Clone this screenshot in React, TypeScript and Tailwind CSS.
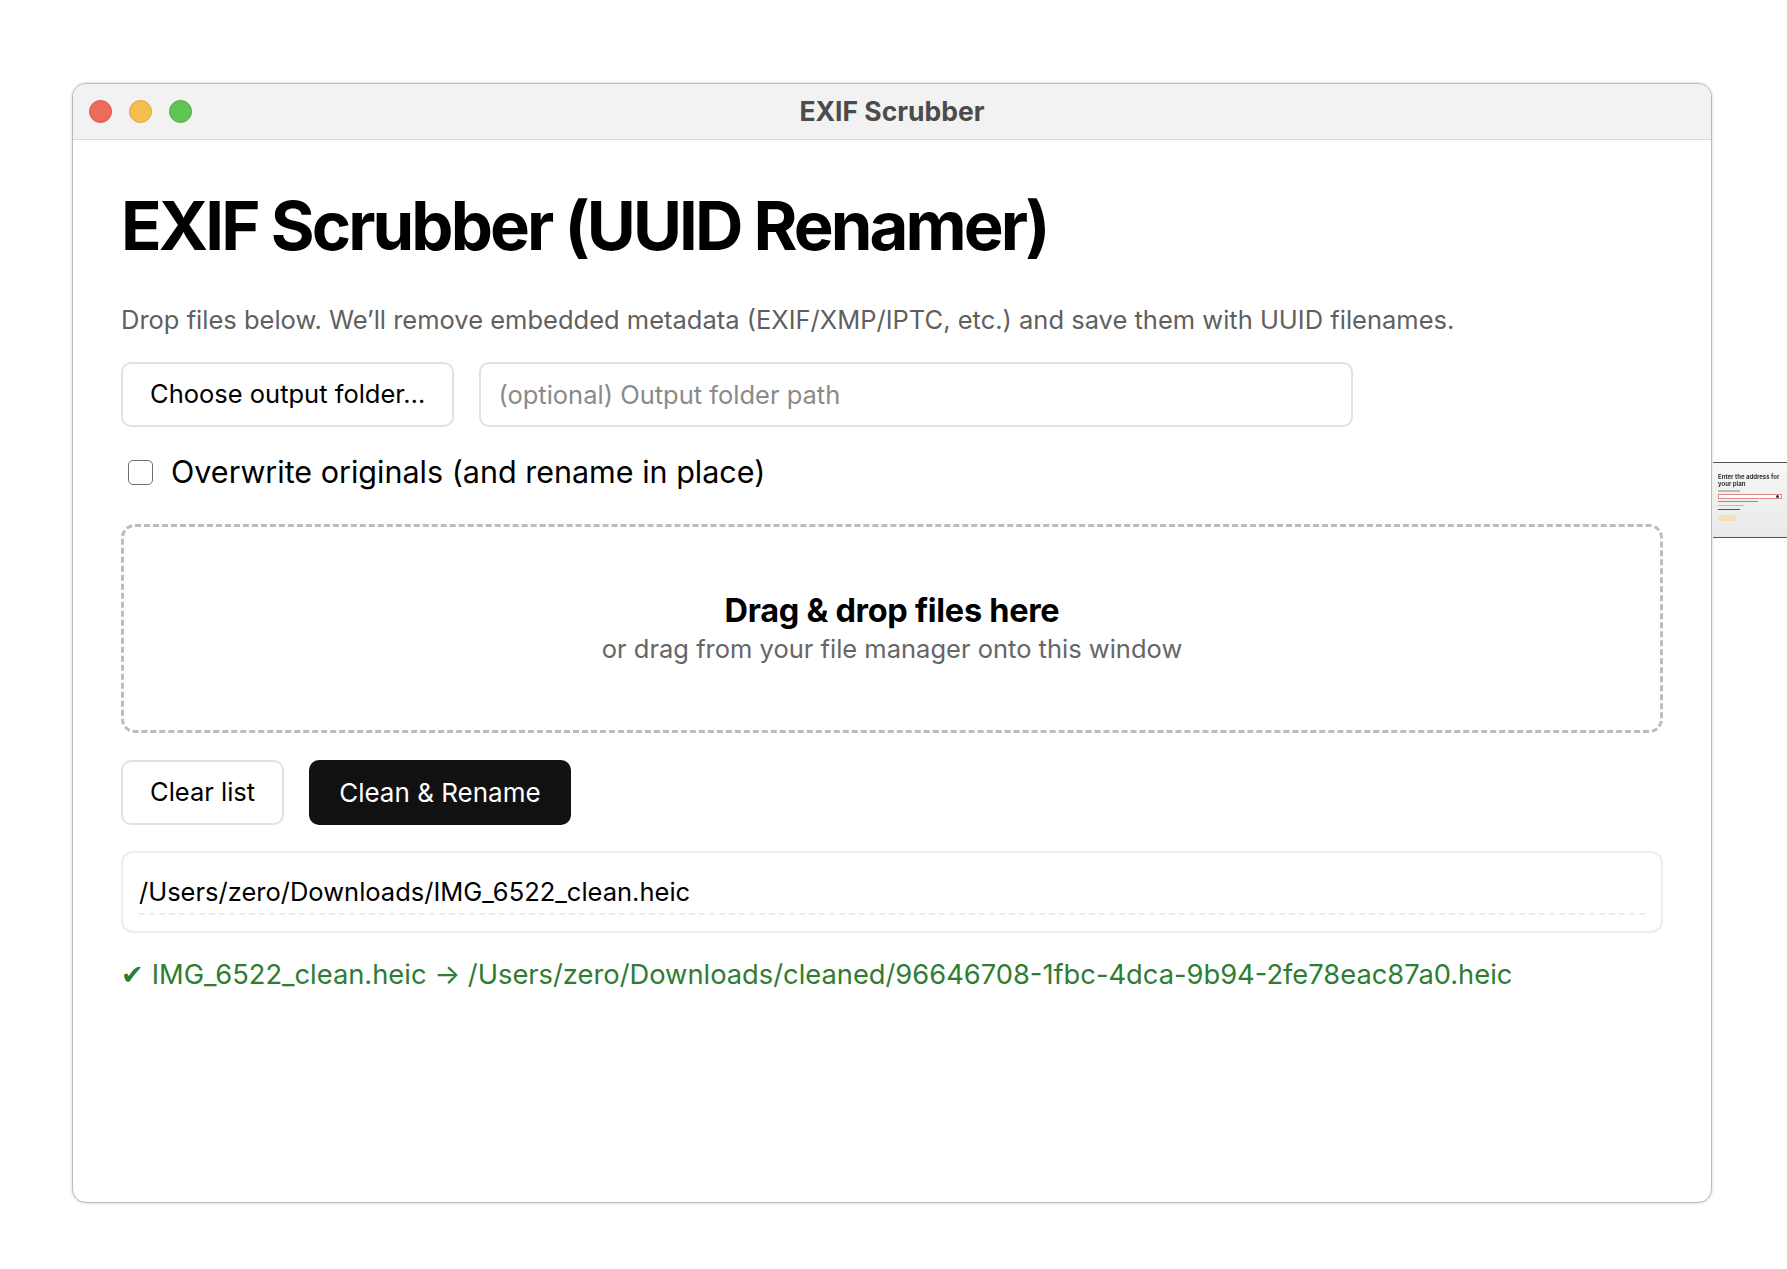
import React from 'react';

function TrafficLights() {
  return (
    <div className="flex items-center gap-[17px]">
      <span className="block w-[23px] h-[23px] rounded-full bg-[#ee6a5f] border border-[#d8564b]" />
      <span className="block w-[23px] h-[23px] rounded-full bg-[#f5bf4f] border border-[#dea63a]" />
      <span className="block w-[23px] h-[23px] rounded-full bg-[#61c454] border border-[#4fab43]" />
    </div>
  );
}

function PeekThumbnail() {
  // a sliver of another window peeking out past the right edge
  return (
    <div className="absolute left-[1713px] top-[462px] w-[74px] h-[76px] border-t border-b border-[#555] bg-gradient-to-b from-[#f7f7f7] to-[#e9e9e9] blur-[0.6px] px-[5px] pt-[10px]">
      <div className="text-[6px] leading-[7px] font-bold text-[#333]">Enter the address for your plan</div>
      <div className="mt-[3px] h-[2px] w-[22px] bg-[#bbb]" />
      <div className="mt-[2px] h-[5px] w-full border border-[#e08a8a] bg-white flex justify-end items-center pr-[2px]">
        <span className="block w-[3px] h-[3px] rounded-full bg-[#333]" />
      </div>
      <div className="mt-[2px] h-[1px] w-[40px] bg-[#e07070]" />
      <div className="mt-[3px] h-[1px] w-[26px] bg-[#bbb]" />
      <div className="mt-[3px] h-[1px] w-[22px] bg-[#555]" />
      <div className="mt-[5px] h-[6px] w-[18px] rounded-full bg-[#f1e2b6]" />
    </div>
  );
}

export default function App() {
  return (
    <div className="relative w-[1787px] h-[1269px] bg-white overflow-hidden font-[Inter,sans-serif] pt-[83px] pl-[72px]">
      <div className="w-[1640px] h-[1120px] rounded-[14px] border border-[#b9b9b9] shadow-[0_0_3px_rgba(0,0,0,0.2)] overflow-hidden bg-white flex flex-col">
        {/* Title bar */}
        <div className="relative h-[56px] shrink-0 bg-[#f1f2f1] border-b border-[#d9d9d9] flex items-center pl-[16px]">
          <TrafficLights />
          <div className="absolute inset-0 flex items-center justify-center pointer-events-none">
            <span className="text-[26.5px] font-bold text-[#4b4b4b]">EXIF Scrubber</span>
          </div>
        </div>

        {/* Content */}
        <div className="px-[48px] pt-[52px] flex flex-col">
          <h1 className="text-[67px] leading-[67px] font-bold text-black tracking-[-2.9px]">
            EXIF Scrubber (UUID Renamer)
          </h1>

          <p className="mt-[45px] text-[25.5px] leading-[32px] text-[#5f5f5f]">
            Drop files below. We’ll remove embedded metadata (EXIF/XMP/IPTC, etc.) and save them with UUID filenames.
          </p>

          <div className="mt-[26px] flex gap-[25px]">
            <button className="h-[65px] px-[27px] rounded-[10px] border-2 border-[#e2e2e2] bg-white text-[25.5px] text-black">
              Choose output folder…
            </button>
            <input
              className="h-[65px] w-[874px] px-[17px] rounded-[10px] border-2 border-[#e2e2e2] text-[25.5px] text-black placeholder:text-[#8a8a8a] outline-none"
              placeholder="(optional) Output folder path"
            />
          </div>

          <label className="mt-[29px] h-[32px] flex items-center gap-[18px] pl-[7px]">
            <span className="block w-[25px] h-[25px] rounded-[5px] border-[1.5px] border-[#707070] bg-white" />
            <span className="text-[30.5px] leading-[32px] text-black">Overwrite originals (and rename in place)</span>
          </label>

          <div className="mt-[36px] h-[209px] rounded-[14px] border-[3px] border-dashed border-[#bdbdbd] flex flex-col items-center justify-center">
            <div className="text-[32.5px] leading-[38px] font-bold text-black tracking-[-0.3px]">Drag &amp; drop files here</div>
            <div className="mt-[3px] text-[25.5px] leading-[32px] text-[#666]">or drag from your file manager onto this window</div>
          </div>

          <div className="mt-[27px] flex gap-[25px]">
            <button className="h-[65px] px-[27px] rounded-[10px] border-2 border-[#e2e2e2] bg-white text-[25.5px] text-black">
              Clear list
            </button>
            <button className="h-[65px] px-[30px] rounded-[10px] bg-[#111] text-[26px] text-white">
              Clean &amp; Rename
            </button>
          </div>

          <div className="mt-[26px] h-[82px] rounded-[12px] border-2 border-[#ededed] px-[16px] pt-[23px]">
            <div className="text-[25.5px] leading-[32px] text-black pb-[5px] border-b-2 border-dashed border-[#ececec]">
              /Users/zero/Downloads/IMG_6522_clean.heic
            </div>
          </div>

          <div className="mt-[26px] text-[27.3px] leading-[32px] text-[#2e7d32]">
            ✔ IMG_6522_clean.heic → /Users/zero/Downloads/cleaned/96646708-1fbc-4dca-9b94-2fe78eac87a0.heic
          </div>
        </div>
      </div>

      <PeekThumbnail />
    </div>
  );
}
